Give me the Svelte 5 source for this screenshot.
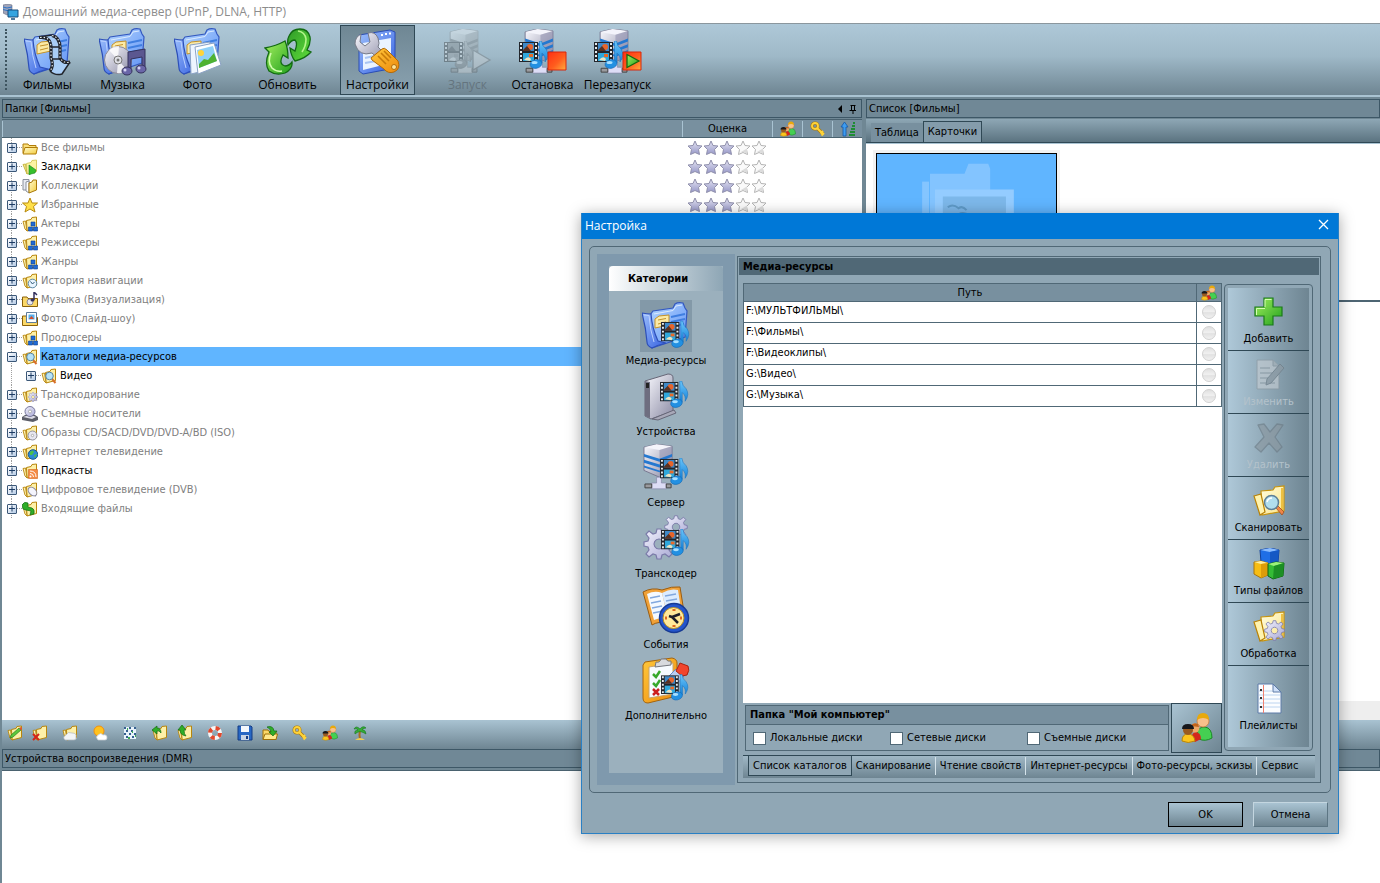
<script>
  const mainGroups = [
    [
      { label: 'Фильмы', icon: 'films' },
      { label: 'Музыка', icon: 'music' },
      { label: 'Фото', icon: 'photo' }
    ],
    [{ label: 'Обновить', icon: 'refresh' }],
    [{ label: 'Настройки', icon: 'tools', active: true }],
    [
      { label: 'Запуск', icon: 'srv-start', disabled: true },
      { label: 'Остановка', icon: 'srv-stop' },
      { label: 'Перезапуск', icon: 'srv-restart' }
    ]
  ];

  const tree = [
    { label: 'Все фильмы', icon: 's-open' },
    { label: 'Закладки', icon: 's-bookmark', strong: true },
    { label: 'Коллекции', icon: 's-collection' },
    { label: 'Избранные', icon: 's-star' },
    { label: 'Актеры', icon: 's-cubes' },
    { label: 'Режиссеры', icon: 's-cubes' },
    { label: 'Жанры', icon: 's-cubes' },
    { label: 'История навигации', icon: 's-clock' },
    { label: 'Музыка (Визуализация)', icon: 's-music' },
    { label: 'Фото (Слайд-шоу)', icon: 's-photo' },
    { label: 'Продюсеры', icon: 's-cubes' },
    { label: 'Каталоги медиа-ресурсов', icon: 's-search', strong: true, selected: true, open: true },
    { label: 'Видео', icon: 's-search', strong: true, child: true },
    { label: 'Транскодирование', icon: 's-gear' },
    { label: 'Съемные носители', icon: 's-drive' },
    { label: 'Образы CD/SACD/DVD/DVD-A/BD (ISO)', icon: 's-disc' },
    { label: 'Интернет телевидение', icon: 's-globe' },
    { label: 'Подкасты', icon: 's-rss', strong: true },
    { label: 'Цифровое телевидение (DVB)', icon: 's-dish' },
    { label: 'Входящие файлы', icon: 's-incoming' }
  ];

  const smallGroups = [
    ['s-edit', 's-delete'],
    ['s-cloud'],
    ['s-weather'],
    ['s-grid'],
    ['s-back', 's-up'],
    ['s-buoy'],
    ['s-floppy', 's-import'],
    ['s-key'],
    ['users'],
    ['s-palm']
  ];
  const smallTitles = {
    's-edit': 'Изменить', 's-delete': 'Удалить', 's-cloud': 'Облако', 's-weather': 'Погода', 's-grid': 'Таблица',
    's-back': 'Назад', 's-up': 'Вверх', 's-buoy': 'Справка', 's-floppy': 'Сохранить', 's-import': 'Открыть',
    's-key': 'Доступ', users: 'Пользователи', 's-palm': 'Отдых'
  };

  const categories = [
    { label: 'Медиа-ресурсы', icon: 'c-media', active: true },
    { label: 'Устройства', icon: 'c-device' },
    { label: 'Сервер', icon: 'c-server' },
    { label: 'Транскодер', icon: 'c-gears' },
    { label: 'События', icon: 'c-events' },
    { label: 'Дополнительно', icon: 'c-extra' }
  ];

  const paths = ['F:\\МУЛЬТФИЛЬМЫ\\', 'F:\\Фильмы\\', 'F:\\Видеоклипы\\', 'G:\\Видео\\', 'G:\\Музыка\\'];

  const actions = [
    { label: 'Добавить', icon: 'a-add' },
    { label: 'Изменить', icon: 'a-edit', disabled: true },
    { label: 'Удалить', icon: 'a-delete', disabled: true },
    { label: 'Сканировать', icon: 'a-scan' },
    { label: 'Типы файлов', icon: 'a-cubes' },
    { label: 'Обработка', icon: 'a-process' },
    { label: 'Плейлисты', icon: 'a-notes' }
  ];

  const disks = ['Локальные диски', 'Сетевые диски', 'Съемные диски'];
  const pages = ['Список каталогов', 'Сканирование', 'Чтение свойств', 'Интернет-ресурсы', 'Фото-ресурсы, эскизы', 'Сервис'];
  const stars = [1, 2, 3, 4, 5];
</script>

{#snippet icon(name, size)}
  <svg class="icon" width={size} height={size} aria-hidden="true"><use href={'#' + name} /></svg>
{/snippet}

<svg class="defs" width="0" height="0" aria-hidden="true">
  <defs>
    <linearGradient id="gBlue" x1="0" y1="0" x2="1" y2="1"><stop offset="0" stop-color="#b4d6ff" /><stop offset="1" stop-color="#5d90f4" /></linearGradient>
    <linearGradient id="gBlueD" x1="0" y1="0" x2="1" y2="1"><stop offset="0" stop-color="#9cbffc" /><stop offset="1" stop-color="#3560e0" /></linearGradient>
    <linearGradient id="gGreen" x1="0" y1="0" x2="1" y2="1"><stop offset="0" stop-color="#a5f05f" /><stop offset="1" stop-color="#1f9f1c" /></linearGradient>
    <linearGradient id="gGreenD" x1="0" y1="0" x2="1" y2="1"><stop offset="0" stop-color="#2f9a28" /><stop offset="1" stop-color="#5fdd3a" /></linearGradient>
    <linearGradient id="gYel" x1="0" y1="0" x2="1" y2="1"><stop offset="0" stop-color="#fffbd0" /><stop offset="1" stop-color="#f3cc3c" /></linearGradient>
    <linearGradient id="gYelL" x1="0" y1="0" x2="1" y2="1"><stop offset="0" stop-color="#fffde0" /><stop offset="1" stop-color="#fbe488" /></linearGradient>
    <linearGradient id="gMetal" x1="0" y1="0" x2="1" y2="1"><stop offset="0" stop-color="#fafaff" /><stop offset="1" stop-color="#8b8ba4" /></linearGradient>
    <linearGradient id="gLav" x1="0" y1="0" x2="1" y2="1"><stop offset="0" stop-color="#f2f2fd" /><stop offset="1" stop-color="#a8a8d4" /></linearGradient>
    <linearGradient id="gNote" x1="0" y1="0" x2="0" y2="1"><stop offset="0" stop-color="#6cc6fa" /><stop offset="1" stop-color="#1380d8" /></linearGradient>
    <linearGradient id="gOrange" x1="0" y1="0" x2="1" y2="1"><stop offset="0" stop-color="#ffc83c" /><stop offset="1" stop-color="#ee8a0c" /></linearGradient>
    <linearGradient id="gStop" x1="0" y1="0" x2="1" y2="1"><stop offset="0" stop-color="#ff2f14" /><stop offset=".55" stop-color="#ff5d1e" /><stop offset="1" stop-color="#ffae3e" /></linearGradient>
    <linearGradient id="gStar" x1="0" y1="0" x2="0" y2="1"><stop offset="0" stop-color="#e4e4f2" /><stop offset="1" stop-color="#9697c8" /></linearGradient>
  </defs>

  <!-- shared parts on a 48-unit grid -->
  <symbol id="p-folder" viewBox="0 0 48 48">
    <path d="M8 13 11 9 31 6 33 2Q36 0 41 1L43 6 45 9 43 35Q28 40 10 46Z" fill="url(#gBlue)" stroke="#3358c0" stroke-width="1.2" />
    <path d="M12 12 31 8.500 34 4 40 3" fill="none" stroke="#dcebff" />
    <path d="M29 15 43 12M29 20 43 17M28 25 42 22" stroke="#3f7ee0" stroke-width="1.800" />
    <path d="M13 17 17 14 27 13V23L13 26Z" fill="#fbeaa6" stroke="#c4922a" />
    <path d="M16 18 24 16.500M16 22 24 20" stroke="#c4922a" />
    <path d="M0 11Q5 12 9 12 10 26 16 39L24 41Q16 43 10 46 5 44 5 40 4 26 0 11Z" fill="url(#gBlueD)" stroke="#2d4fb8" stroke-width="1.2" />
    <path d="M2 13 7 13.500Q8 28 12 40" fill="none" stroke="#bcd2ff" />
  </symbol>
  <symbol id="p-media" viewBox="0 0 30 28">
    <path d="M0 1H19V21H0Z" fill="#23262c" />
    <path d="M4 2H15V10H4Z" fill="#3f89c8" /><path d="M4 12H15V20H4Z" fill="#2fa8dc" />
    <circle cx="11" cy="6" r="3" fill="#e8642a" /><path d="M4 9 8 5 12 10H4Z" fill="#5a3222" /><path d="M5 19Q9 14 12 18L11 20Z" fill="#ece3c0" /><path d="M10 13h4v3h-4z" fill="#e86a28" />
    <path d="M1 3h2M1 7h2M1 11h2M1 15h2M1 19h2M16 3h2M16 7h2M16 11h2M16 15h2M16 19h2" stroke="#e6ebee" stroke-width="2" />
    <path d="M20.500 0H22.500Q23 5 27 8 31 14 26 21 27 15 23 12V22H20.500Z" fill="url(#gNote)" stroke="#1a75c0" stroke-width=".6" />
    <ellipse cx="17" cy="23" rx="6" ry="4.300" transform="rotate(-12 17 23)" fill="#2290e2" stroke="#1568b4" stroke-width=".6" />
    <ellipse cx="15.500" cy="21.500" rx="3" ry="1.500" fill="#a8e0ff" />
  </symbol>
  <symbol id="p-server" viewBox="0 0 32 48">
    <path d="M1 3 14 0 30 2 30 29 17 34 1 27Z" fill="url(#gMetal)" stroke="#77778f" />
    <path d="M1 3 17 6 30 2 14 0Z" fill="#f4f4fb" />
    <path d="M17 6 30 2V29L17 34Z" fill="#8f8fae" opacity=".55" />
    <path d="M1 10 17 15 30 10V13L17 18 1 13ZM1 16 17 21 30 16V19L17 24 1 19ZM1 22 17 27 30 22V24L17 29 1 24Z" fill="#2478d0" />
    <path d="M14 34H19V40H24V46H9V40H14Z" fill="#ddddf6" stroke="#8888aa" stroke-width=".7" />
    <path d="M2 41H9V45H2ZM24 41H29V45H24Z" fill="#9a9a9e" stroke="#444" />
  </symbol>
  <symbol id="p-gear" viewBox="0 0 32 32">
    <path fill-rule="evenodd" d="M14 1h4l1 4 3 1 4-3 3 3-3 4 1 3 4 1v4l-4 1-1 3 3 4-3 3-4-3-3 1-1 4h-4l-1-4-3-1-4 3-3-3 3-4-1-3-4-1v-4l4-1 1-3-3-4 3-3 4 3 3-1ZM16 11a5 5 0 1 0 .1 0Z" fill="url(#gLav)" stroke="#7a7aa8" stroke-width="1.200" />
  </symbol>
  <symbol id="p-yfolder" viewBox="0 0 32 32">
    <path d="M8 6 20 5 22 2 31 1V26L9 30Z" fill="url(#gYelL)" stroke="#c8940e" stroke-width="1.200" />
    <path d="M1 11 8 9 12 27 7 30Z" fill="#fff3ae" stroke="#b98206" stroke-width="1.200" />
    <path d="M29 3V25" stroke="#eec040" stroke-width="2" />
  </symbol>
  <symbol id="p-lens" viewBox="0 0 22 22">
    <path d="M13 14 15 12 21 18 19 21Z" fill="#f08648" stroke="#a04c1c" stroke-width=".8" />
    <circle cx="8.500" cy="8.500" r="7" fill="#a8dbf4" fill-opacity=".9" stroke="#5e7f96" stroke-width="1.500" />
    <path d="M4 8Q5 4 9 4" fill="none" stroke="#fff" stroke-width="1.500" />
  </symbol>

  <!-- main toolbar -->
  <symbol id="films" viewBox="0 0 48 48">
    <use href="#p-folder" width="48" height="48" />
    <path d="M15 9 28 7Q36 9 36 20V30Q40 36 46 34L38 46Q31 48 26 43 30 38 27 30V20Q26 9 15 9Z" fill="#a9cdf6" />
    <path d="M15 9.500Q27 8 27 20V30Q30 38 26 43M28 7.500Q36 9 36 20V30Q40 36 46 34" fill="none" stroke="#22252c" stroke-width="3.200" /><path d="M15 9 28 7M46 34 38 46Q31 48 26 43" fill="none" stroke="#22252c" stroke-width="1.500" />
    <path d="M16 9.500Q27 8 27 20V30Q30 38 26 43M28 7.500Q36 9 36 20V30Q40 36 46 34" fill="none" stroke="#e6ecf2" stroke-width="1.200" stroke-dasharray="1.500 2" />
    <path d="M27 19H36M28 31H36" stroke="#22252c" stroke-width="1.300" />
  </symbol>
  <symbol id="music" viewBox="0 0 48 48">
    <use href="#p-folder" width="48" height="48" />
    <circle cx="19" cy="32" r="13.500" fill="url(#gMetal)" stroke="#8a8a98" />
    <path d="M19 32 10 22Q14 18 20 18ZM19 32 28 42Q24 46 18 45Z" fill="#fff" opacity=".8" />
    <circle cx="19" cy="32" r="4" fill="#dfe0e6" stroke="#777" /><circle cx="19" cy="32" r="1.500" fill="#777" />
    <path d="M29 24 46 21V41H43V29L32 31V43H29Z" fill="#5b5790" stroke="#35325c" />
    <ellipse cx="28" cy="43" rx="5" ry="4" fill="#6a66a8" stroke="#35325c" /><ellipse cx="42" cy="41" rx="5" ry="4" fill="#6a66a8" stroke="#35325c" /><circle cx="26" cy="42" r="1.500" fill="#d6d4f4" /><circle cx="40" cy="40" r="1.500" fill="#d6d4f4" />
  </symbol>
  <symbol id="photo" viewBox="0 0 48 48">
    <use href="#p-folder" width="48" height="48" />
    <path d="M16 17 36 14 34 42 17 46Z" fill="#eef5ff" stroke="#8ba2c4" />
    <path d="M21 19 40 15 47 37 24 46Z" fill="#fff" stroke="#8ba2c4" />
    <path d="M23 22 39 18 43 33 25 40Z" fill="#8fd0f8" /><circle cx="27" cy="25" r="3" fill="#ffd43a" />
    <path d="M25 36 30 31 34 32 40 25 43 33 25 40Z" fill="#4fb232" />
  </symbol>
  <symbol id="refresh" viewBox="0 0 48 48">
    <path d="M25 8Q28 1 36 1 44 1 46 9 47 15 43 22L47 24Q42 30 31 33 27 28 26 20L31 23Q34 15 31 12 27 12 24 17 23 12 25 8Z" fill="url(#gGreenD)" stroke="#126a12" stroke-width="1.300" />
    <path d="M34 3Q41 4 42 11 42 18 38 24" fill="none" stroke="#b4f58a" stroke-width="1.600" />
    <path d="M1 20Q12 18 21 13 24 20 24 30L19 27Q14 36 21 38 25 38 28 34 29 41 21 45 12 48 5 43 0 36 5 24Z" fill="url(#gGreen)" stroke="#126a12" stroke-width="1.300" />
    <path d="M7 25Q3 34 8 40 12 44 18 43" fill="none" stroke="#d0ffae" stroke-width="1.600" />
  </symbol>
  <symbol id="tools" viewBox="0 0 48 48">
    <path d="M5 7 36 2 41 4V40L9 46 5 43Z" fill="url(#gBlueD)" stroke="#2a4db4" />
    <path d="M9 15 37 10V35L9 42Z" fill="#eaf3ff" /><path d="M27 7h2M31 6h2M35 5.500h2" stroke="#fff" stroke-width="2" />
    <path d="M11 25 18 23M11 30 25 27M11 35 22 33" stroke="#a8c4f2" stroke-width="2" />
    <path d="M1 16Q1 9 7 6L6 14 11 18 16 14 14 5Q21 3 24 10 26 16 24 19L32 27 27 33 18 25Q5 29 1 16Z" fill="url(#gMetal)" stroke="#777b88" />
    <path d="M17 30 28 21Q30 19 33 22L44 33Q47 41 40 44 34 46 30 41L18 32Z" fill="url(#gOrange)" stroke="#b36a08" />
    <path d="M24 28 32 36M27 25 35 33M30 23 37 30" stroke="#c67a0a" stroke-width="1.600" /><circle cx="40" cy="39" r="2.500" fill="#fde39a" stroke="#b36a08" />
  </symbol>
  <symbol id="p-srvmedia" viewBox="0 0 48 48">
    <use href="#p-server" x="5" y="1" width="31" height="46" />
    <use href="#p-media" x="0" y="13" width="30" height="28" />
  </symbol>
  <symbol id="srv-stop" viewBox="0 0 48 48">
    <use href="#p-srvmedia" width="48" height="48" />
    <path d="M29 24H47V42H29Z" fill="url(#gStop)" stroke="#d8260c" />
  </symbol>
  <symbol id="srv-restart" viewBox="0 0 48 48">
    <use href="#p-srvmedia" width="48" height="48" />
    <path d="M29 24H47V42H29Z" fill="url(#gStop)" stroke="#d8260c" />
    <path d="M33 26.500 45 33 33 39.500Z" fill="url(#gGreen)" stroke="#146a10" stroke-width="1.300" />
  </symbol>
  <symbol id="srv-start" viewBox="0 0 48 48">
    <use href="#p-srvmedia" width="48" height="48" />
    <path d="M29 22 46 32 29 42Z" fill="#d8d8d8" stroke="#666" stroke-width="1.300" />
  </symbol>

  <!-- dialog categories -->
  <symbol id="c-media" viewBox="0 0 48 48">
    <use href="#p-folder" width="48" height="48" />
    <use href="#p-media" x="19" y="19" width="29" height="27" />
  </symbol>
  <symbol id="c-device" viewBox="0 0 48 48">
    <path d="M3 8 26 1Q31 1 31 5V38L9 46 3 43Z" fill="url(#gMetal)" stroke="#666677" />
    <path d="M3 8 8 9V45L3 43Z" fill="#6e6e80" /><path d="M4 10h3v5H4z" fill="#222" />
    <path d="M10 46 32 37 34 40 16 47Z" fill="#a8a8b8" stroke="#666677" />
    <use href="#p-media" x="18" y="8" width="29" height="27" />
  </symbol>
  <symbol id="c-server" viewBox="0 0 48 48">
    <use href="#p-server" x="1" y="0" width="31" height="47" />
    <use href="#p-media" x="18" y="14" width="29" height="27" />
  </symbol>
  <symbol id="c-gears" viewBox="0 0 48 48">
    <use href="#p-gear" x="22" y="0" width="24" height="24" />
    <use href="#p-gear" x="1" y="13" width="32" height="32" />
    <use href="#p-media" x="19" y="14" width="29" height="27" />
  </symbol>
  <symbol id="c-events" viewBox="0 0 48 48">
    <path d="M1 6Q10 1 20 4 30 0 38 1L43 32Q30 34 26 37 16 35 10 39Z" fill="#f0a138" stroke="#9b5c10" />
    <path d="M5 8Q13 4 20 7L26 33Q18 31 12 34Z" fill="#f4f9ff" /><path d="M20 7Q28 2 36 4L40 30Q31 30 26 33Z" fill="#dcecff" />
    <path d="M8 12 18 10M9 17 19 15M10 22 20 20M11 27 21 25M23 10 34 8M24 15 35 13M25 20 35 18" stroke="#82a8de" stroke-width="1.600" />
    <circle cx="32" cy="32" r="14.500" fill="#2455cc" stroke="#173a94" stroke-width="1.500" /><circle cx="31.500" cy="32" r="10.500" fill="#ffe99a" stroke="#b98f24" />
    <path d="M32 23v2M32 39v2M23 32h2M38 32h2" stroke="#e06a1e" stroke-width="3" /><path d="M36 37 30 31 38 28M30 31 27 30" fill="none" stroke="#1f1f28" stroke-width="2.500" />
  </symbol>
  <symbol id="c-extra" viewBox="0 0 48 48">
    <path d="M3 5 30 1Q35 2 35 6V39L6 46Q1 46 1 41V8Z" fill="url(#gOrange)" stroke="#a4640e" />
    <path d="M7 10 31 6V37L7 41Z" fill="#f7fbff" stroke="#c7a46c" /><path d="M14 5Q18 6 19 2H24Q25 5 29 4L29 8 13 10Z" fill="#d8dade" stroke="#74777e" />
    <path d="M11 17 14 20 18 14M11 26 14 29 18 23" fill="none" stroke="#38a82c" stroke-width="2.500" /><path d="M11 32 17 38M17 32 11 38" stroke="#cc1f1f" stroke-width="2.500" />
    <path d="M34 12 42 19 30 32 24 22Z" fill="#b8cdf2" stroke="#6c88c4" /><path d="M38 6 46 9Q48 13 45 18L40 19 34 14Z" fill="#f2452c" stroke="#aa2410" />
    <use href="#p-media" x="19" y="17" width="28" height="27" />
  </symbol>

  <!-- dialog actions -->
  <symbol id="a-add" viewBox="0 0 32 32">
    <path d="M11 2H20V11H29V20H20V29H11V20H2V11H11Z" fill="url(#gGreen)" stroke="#1a7a1a" stroke-width="1.200" />
    <path d="M12 11V3.500H18.500M3.500 19V12.500H12" fill="none" stroke="#d4ffb4" />
  </symbol>
  <symbol id="a-edit" viewBox="0 0 32 32">
    <path d="M4 1H20L26 7V30H4Z" fill="#c9cfd4" stroke="#8b969e" /><path d="M20 1V7H26" fill="#aeb7bd" stroke="#8b969e" />
    <path d="M7 9H17M7 14H19M7 19H15M7 24H22" stroke="#98a2a9" stroke-width="1.500" /><path d="M27 5 31 9 18 24 13 26 14 20Z" fill="#8f9aa2" stroke="#6b7780" />
  </symbol>
  <symbol id="a-delete" viewBox="0 0 32 32">
    <path d="M5 3 11 2 17 10 24 2 30 3 22 15 29 25 24 30 16 21 8 30 2 25 11 15Z" fill="#8a969e" stroke="#6a7882" stroke-width="1.300" stroke-linejoin="round" />
  </symbol>
  <symbol id="a-scan" viewBox="0 0 32 32"><use href="#p-yfolder" width="32" height="32" /><use href="#p-lens" x="10" y="9" width="22" height="22" /></symbol>
  <symbol id="a-process" viewBox="0 0 32 32"><use href="#p-yfolder" width="32" height="32" /><use href="#p-gear" x="11" y="9" width="21" height="21" /></symbol>
  <symbol id="a-cubes" viewBox="0 0 32 32">
    <path d="M7 2 17 0 26 2 25 14 17 16 8 14Z" fill="#1f6ee6" stroke="#0f3f9c" stroke-linejoin="round" /><path d="M7 2 17 4 26 2 17 0Z" fill="#8abcff" /><path d="M17 4 26 2 25 14 17 16Z" fill="#1558c4" />
    <path d="M1 14 8 13 15 15V27L8 30 1 26Z" fill="#f6bd14" stroke="#a8740a" stroke-linejoin="round" /><path d="M1 14 8 16 15 15 8 13Z" fill="#fff0a0" /><path d="M8 16 15 15V27L8 30Z" fill="#dc9c0a" />
    <path d="M15 16 23 14 31 15 30 28 20 31 15 28Z" fill="#35bc36" stroke="#0f6414" stroke-linejoin="round" /><path d="M15 16 21 18 31 15 23 14Z" fill="#9cf07a" /><path d="M21 18 31 15 30 28 20 31Z" fill="#1c8f24" />
  </symbol>
  <symbol id="a-notes" viewBox="0 0 32 32">
    <path d="M5 1H20L28 9V30H5Z" fill="#fbfdff" stroke="#5d7ba8" /><path d="M20 1V9H28Z" fill="#cfe0f8" stroke="#5d7ba8" />
    <path d="M6 8H19M6 12H27M6 16H27M6 20H27M6 24H27" stroke="#bcd4f0" /><path d="M10.500 2V30" stroke="#f08070" /><path d="M7 7h2M7 15h2M7 24h2" stroke="#333" stroke-width="2" />
  </symbol>
  <symbol id="users" viewBox="0 0 32 32">
    <path d="M16 21Q17 15 24 15 31 16 31 26 24 30 18 27Z" fill="#45cf52" stroke="#198a24" />
    <circle cx="22" cy="9" r="6" fill="#f9c08a" stroke="#c87f3c" stroke-width=".8" /><path d="M16 8Q16 1 22 1 28 1 28 8 22 4 16 8Z" fill="#e8a90c" />
    <path d="M10 27Q11 20 15 20 20 21 20 27L14 30Z" fill="#d4261c" /><circle cx="14" cy="16" r="4.500" fill="#eea868" /><path d="M10 14Q12 10 17 12L18 15Z" fill="#c4641c" />
    <path d="M1 29Q1 22 7 22 13 22 14 29 7 32 1 29Z" fill="#fcc51e" stroke="#b8860a" /><circle cx="7" cy="18" r="5" fill="#9a5a20" /><path d="M1 17Q1 12 7 12 13 12 13 17Z" fill="#17171b" />
  </symbol>

  <!-- 16-unit icons -->
  <symbol id="s-app" viewBox="0 0 16 16">
    <path d="M0 1 5 0 9 1V10L4 11 0 9Z" fill="#9fa4ba" stroke="#666b80" stroke-width=".6" /><path d="M0 3 4 4 9 3M0 5.500 4 6.500 9 5.500" stroke="#2d73c8" fill="none" />
    <path d="M5 6H15V13H5Z" fill="#34a4e0" stroke="#174c7c" /><path d="M8 15h4" stroke="#174c7c" stroke-width="1.500" />
  </symbol>
  <symbol id="s-base" viewBox="0 0 16 16"><path d="M4.500 4.500 9 3.500 10 1.500 14.500 1V12.500L5 15Z" fill="#fdf0a8" stroke="#b8860e" /><path d="M1 5.500 3.500 5 5 15 3 13Z" fill="#fff4b0" stroke="#b8860e" stroke-width=".9" /></symbol>
  <symbol id="s-open" viewBox="0 0 16 16"><path d="M1 13V4H6L7 5.500H14V7" fill="#fbe07c" stroke="#b07c08" /><path d="M1 14 3 7.500H15.500L14 14Z" fill="url(#gYel)" stroke="#b07c08" /></symbol>
  <symbol id="s-bookmark" viewBox="0 0 16 16"><path d="M4.500 4.500 9 3.500 10 1.500 14.500 1V12.500L5 15Z" fill="#fdf3a4" stroke="#d8cc60" /><path d="M1 5.500 3.500 5 5 15Z" fill="#f6eb88" stroke="#c8b848" /><path d="M7 6 14 11 13 14 9 15 7 16Z" fill="#37c02c" stroke="#17801a" stroke-width=".6" /></symbol>
  <symbol id="s-collection" viewBox="0 0 16 16"><path d="M1 1.500H7V12H1Z" fill="#e8ebf2" stroke="#8a909c" /><path d="M4 4 7 3V15L4 13Z" fill="#fff" stroke="#8a909c" /><path d="M7 5 10 4 11 2H14.500V12L7 15Z" fill="url(#gYel)" stroke="#a87808" /></symbol>
  <symbol id="s-star" viewBox="0 0 16 16"><path d="M8 1 10 6 15.500 6 11.500 9.500 13 15 8 12 3 15 4.500 9.500 .500 6 6 6Z" fill="#ffe04a" stroke="#b88a10" stroke-linejoin="round" /></symbol>
  <symbol id="s-cubes" viewBox="0 0 16 16"><use href="#s-base" width="16" height="16" /><path d="M9 6h4v4H9zM6.500 11h4v4h-4zM11.500 11h4v4h-4z" fill="#1f6ad4" stroke="#0e3f94" stroke-width=".6" /></symbol>
  <symbol id="s-clock" viewBox="0 0 16 16"><use href="#s-base" width="16" height="16" /><circle cx="10.500" cy="10.500" r="4.300" fill="#e9f5ff" stroke="#5a88a8" /><path d="M8.500 8.500 10.500 11 12.500 9" stroke="#2d5878" fill="none" /></symbol>
  <symbol id="s-music" viewBox="0 0 16 16"><path d="M.500 14.500V5H5L6 6.500H15.500V14.500Z" fill="#fbd868" stroke="#8a6008" /><circle cx="8" cy="10" r="3" fill="#e8e8f0" stroke="#889" /><path d="M12 8V0L15 3" stroke="#33305c" stroke-width="1.500" fill="none" /><ellipse cx="10.500" cy="8" rx="2" ry="1.500" fill="#33305c" /></symbol>
  <symbol id="s-photo" viewBox="0 0 16 16"><path d="M.500 14.500V5H5L6 6.500H15.500V14.500Z" fill="#fbd868" stroke="#8a6008" /><path d="M4.500 1.500H14.500V11.500H4.500Z" fill="#fff" stroke="#5c7c9c" /><path d="M6.500 3.500h6v5h-6z" fill="#58b0ec" /><path d="M7 8 9.500 5 12 8Z" fill="#d84a28" /></symbol>
  <symbol id="s-search" viewBox="0 0 16 16"><use href="#s-base" width="16" height="16" /><path d="M11 11 14.500 15" stroke="#d8702c" stroke-width="2" /><circle cx="8.500" cy="8" r="3.800" fill="#b4e2f8" stroke="#5884a0" /></symbol>
  <symbol id="s-gear" viewBox="0 0 16 16"><use href="#s-base" width="16" height="16" /><use href="#p-gear" x="6" y="5" width="10" height="10" /></symbol>
  <symbol id="s-drive" viewBox="0 0 16 16"><path d="M0 11 3 9H13L16 11V14L11 16 0 14Z" fill="#5c5e68" /><path d="M1 11 4 10H12L14 11 10 13Z" fill="#dcdce6" /><circle cx="8" cy="5.500" r="5" fill="url(#gLav)" stroke="#77779c" /><circle cx="8" cy="5.500" r="1.500" fill="#fff" stroke="#888" stroke-width=".6" /></symbol>
  <symbol id="s-disc" viewBox="0 0 16 16"><use href="#s-base" width="16" height="16" /><circle cx="10.500" cy="10.500" r="4.500" fill="#e6e6f0" stroke="#90909c" /><circle cx="10.500" cy="10.500" r="1.200" fill="#fff" stroke="#888" stroke-width=".6" /></symbol>
  <symbol id="s-globe" viewBox="0 0 16 16"><use href="#s-base" width="16" height="16" /><circle cx="11" cy="10.500" r="4.800" fill="#2c8ad4" stroke="#185890" /><path d="M8 8Q11 5 12 8L10 11 8 11ZM12 11 15 10 13 14Z" fill="#4cc048" /></symbol>
  <symbol id="s-rss" viewBox="0 0 16 16"><use href="#s-base" width="16" height="16" /><path d="M6.500 6.500h9v9h-9z" fill="#f58a44" stroke="#d2641c" stroke-width=".6" /><circle cx="8.500" cy="13.500" r="1" fill="#fff" /><path d="M8 10.500Q11.500 10.500 11.500 14M8 8Q14 8 14 14" fill="none" stroke="#fff" /></symbol>
  <symbol id="s-dish" viewBox="0 0 16 16"><use href="#s-base" width="16" height="16" /><path d="M7 6Q5 13 14 14Z" fill="#e2e2f0" stroke="#88889c" /><ellipse cx="10.500" cy="9.500" rx="5" ry="3.500" transform="rotate(45 10.500 9.500)" fill="#f4f4fc" stroke="#88889c" /></symbol>
  <symbol id="s-incoming" viewBox="0 0 16 16"><use href="#s-base" width="16" height="16" /><path d="M0 4Q2 0 6 2V6L10 7Q13 8 12 13L8 14 9 10 4 9 1 8Z" fill="#2fae28" stroke="#146c14" stroke-width=".7" /></symbol>
  <symbol id="s-edit" viewBox="0 0 16 16"><use href="#s-base" width="16" height="16" /><path d="M3 13 4 10 12 3 14 5 6 12Z" fill="#5cc83c" stroke="#2c7c1c" stroke-width=".7" /><path d="M12 3 14 2 15 4 14 5Z" fill="#e84c30" /></symbol>
  <symbol id="s-delete" viewBox="0 0 16 16"><use href="#s-base" width="16" height="16" /><path d="M1 9 7 15M7 9 1 15" stroke="#d42418" stroke-width="2" /></symbol>
  <symbol id="s-cloud" viewBox="0 0 16 16"><use href="#s-base" width="16" height="16" /><path d="M3 15Q0 12 4 10 6 6 10 8 15 8 14 12 15 15 12 15Z" fill="#f2f4f6" stroke="#b0b6bc" stroke-width=".7" /></symbol>
  <symbol id="s-weather" viewBox="0 0 16 16"><circle cx="7" cy="6" r="5" fill="#ffc21e" stroke="#f09010" /><path d="M6 15Q3 12 6 10 9 7 11 10 15 9 15 13 15 15 13 15Z" fill="#fff" stroke="#c8ccd0" stroke-width=".7" /></symbol>
  <symbol id="s-grid" viewBox="0 0 16 16"><path d="M2 2h12v12H2z" fill="#e8f2fb" /><path d="M2 3h2M7 3h2M12 3h2M4 6h2M9 6h2M2 9h2M7 9h2M12 9h2M4 12h2M10 12h2" stroke="#356090" stroke-width="2" /><path d="M5 4h1M10 7h1M6 13h2M13 11h1" stroke="#3fae52" stroke-width="2" /></symbol>
  <symbol id="s-back" viewBox="0 0 16 16"><use href="#s-base" width="16" height="16" /><path d="M0 5 5 1V3Q9 3 9 8 7 5 5 6V9Z" fill="#2fae28" stroke="#146c14" stroke-width=".7" /></symbol>
  <symbol id="s-up" viewBox="0 0 16 16"><use href="#s-base" width="16" height="16" /><path d="M5 0 9 5H7Q7 9 9 11 3 10 3 5H1Z" fill="#2fae28" stroke="#146c14" stroke-width=".7" /></symbol>
  <symbol id="s-buoy" viewBox="0 0 16 16"><circle cx="8" cy="8" r="5" fill="none" stroke="#f6f6f6" stroke-width="4" /><circle cx="8" cy="8" r="5" fill="none" stroke="#e0492e" stroke-width="4" stroke-dasharray="3.900 3.950" /></symbol>
  <symbol id="s-floppy" viewBox="0 0 16 16"><path d="M1 1H14L15 2V15H1Z" fill="#2767c4" stroke="#143c84" /><path d="M4 1H12V7H4Z" fill="#f4f8fc" /><path d="M4 10H12V15H4Z" fill="#c8d4e4" /><path d="M9 11h2v3H9z" fill="#143c84" /></symbol>
  <symbol id="s-import" viewBox="0 0 16 16"><path d="M1 14.500V5H6L7 6.500H14V14.500Z" fill="#fbd868" stroke="#a07008" /><path d="M1 14.500 3 9H15.500L14 14.500Z" fill="#ffe88c" stroke="#a07008" /><path d="M5 2Q11 0 12 6H15L11 11 7 7H9Q9 4 5 2Z" fill="#2fae28" stroke="#146c14" stroke-width=".7" /></symbol>
  <symbol id="s-key" viewBox="0 0 16 16"><path d="M7 7 13 13" stroke="#b07c08" stroke-width="3.500" /><circle cx="5" cy="5" r="3" fill="none" stroke="#b07c08" stroke-width="3" /><circle cx="5" cy="5" r="3" fill="none" stroke="#ffd43a" stroke-width="1.800" /><path d="M7 7 13 13M13 10 10.500 12.500M14 12 11.500 14.500" stroke="#ffd43a" stroke-width="2" /></symbol>
  <symbol id="s-palm" viewBox="0 0 16 16"><path d="M8 5Q7 10 8 14" stroke="#a86c20" stroke-width="2" fill="none" /><path d="M8 4Q4 0 2 4 5 3 6 5 2 5 3 9 5 7 8 6.500 11 7 14 9 14 5 10 4.500 12 3 14 3 11 0 8 4Z" fill="#35ae34" stroke="#187424" stroke-width=".6" /><path d="M3 15Q8 11 13 15Z" fill="#f0ce50" /></symbol>
  <symbol id="s-sort" viewBox="0 0 16 16"><path d="M4.500 1 8 6H6V15H3V6H1Z" fill="#3e9cf0" stroke="#1458a8" stroke-width=".8" /><path d="M13 2h2M12 5h3M11 8h4M10 11h5M9 14h6" stroke="#1f8c34" stroke-width="2" /></symbol>
  <symbol id="star-on" viewBox="0 0 16 16"><path d="M8 1 10 5.500 15 6 11.500 9.500 12.500 14.500 8 12.500 3.500 14.500 4.500 9.500 1 6 6 5.500Z" fill="url(#gStar)" stroke="#9090ac" stroke-linejoin="round" /></symbol>
  <symbol id="star-off" viewBox="0 0 16 16"><path d="M8 1 10 5.500 15 6 11.500 9.500 12.500 14.500 8 12.500 3.500 14.500 4.500 9.500 1 6 6 5.500Z" fill="#fafafa" stroke="#b4b4b4" stroke-linejoin="round" /><path d="M5 12.500 12 8.500 12 13.500 8 12Z" fill="#dcdcdc" /></symbol>
</svg>

<div class="app">
  <header class="titlebar">{@render icon('s-app', 16)}<span>Домашний медиа-сервер (UPnP, DLNA, HTTP)</span></header>

  <nav class="toolbar">
    {#each mainGroups as group}
      <div class="group">
        {#each group as b}
          <button class="tool" class:active={b.active} disabled={b.disabled}>{@render icon(b.icon, 48)}<span>{b.label}</span></button>
        {/each}
      </div>
    {/each}
  </nav>

  <main class="workspace">
    <section class="pane">
      <h2 class="caption">
        <span>Папки [Фильмы]</span>
        <svg class="pins" width="20" height="10" aria-hidden="true"><path d="M5 1V9L1 5Z" fill="#000" /><path d="M13.500 1.500H18.500M14.500 1V6M17.500 1V6M12.500 6.500H19M16 7V10" stroke="#000" fill="none" /></svg>
      </h2>
      <div class="columns">
        <span></span><span>Оценка</span><span>{@render icon('users', 16)}</span><span>{@render icon('s-key', 16)}</span><span>{@render icon('s-sort', 16)}</span>
      </div>
      <ul class="tree">
        {#each tree as n}
          <li class:child={n.child} class:strong={n.strong} class:selected={n.selected}>
            <button class="toggle" class:open={n.open} aria-label={n.label}></button>
            <span class="dots"></span>
            {@render icon(n.icon, 16)}
            <span class="label">{n.label}</span>
            <span class="rating">{#each stars as s}{@render icon(s < 4 ? 'star-on' : 'star-off', 16)}{/each}</span>
          </li>
        {/each}
      </ul>
    </section>

    <section class="pane right">
      <h2 class="caption"><span>Список [Фильмы]</span></h2>
      <div class="viewtabs"><button>Таблица</button><button class="current">Карточки</button></div>
      <div class="cards">
        <div class="card">
          <svg viewBox="0 0 180 146" aria-hidden="true">
            <path d="M45 28H52V140H45Z" fill="#84c5ff" /><path d="M53 20H88L92 10H112L114 15V140H53Z" fill="#83c4ff" />
            <path d="M58 36H138V140H58Z" fill="#94ccff" /><path d="M66 43H130V130H66Z" fill="#7db8ea" />
            <path d="M71 54Q76 50 82 55 86 52 90 57M82 61Q88 58 93 63" fill="none" stroke="#5f9ac8" stroke-width="2" />
          </svg>
        </div>
      </div>
      <div class="details"></div>
      <div class="strip"></div>
    </section>
  </main>

  <div class="smallbar">
    {#each smallGroups as group}
      <div class="group">
        {#each group as name}<button aria-label={smallTitles[name]}>{@render icon(name, 16)}</button>{/each}
      </div>
    {/each}
  </div>

  <section class="devices">
    <h2 class="caption"><span>Устройства воспроизведения (DMR)</span></h2>
    <div class="blank"></div>
  </section>
</div>

<div class="dialog" role="dialog" aria-labelledby="dlg-title">
  <header>
    <h1 id="dlg-title">Настройка</h1>
    <button aria-label="Закрыть"><svg width="11" height="11" aria-hidden="true"><path d="M1 1 10 10M10 1 1 10" stroke="#fff" stroke-width="1.300" /></svg></button>
  </header>

  <div class="frame">
    <aside>
      <div class="cats">
        <h2>Категории</h2>
        {#each categories as c}
          <button class:active={c.active}><span class="pic">{@render icon(c.icon, 48)}</span><span>{c.label}</span></button>
        {/each}
      </div>
    </aside>

    <section class="page">
      <h2>Медиа-ресурсы</h2>
      <div class="split">
        <div class="main">
          <div class="list">
            <table>
              <thead><tr><th>Путь</th><th class="flag">{@render icon('users', 16)}</th></tr></thead>
              <tbody>
                {#each paths as p}
                  <tr><td>{p}</td><td class="flag"><span class="dot"></span></td></tr>
                {/each}
              </tbody>
            </table>
          </div>
          <div class="under">
            <fieldset>
              <legend>Папка "Мой компьютер"</legend>
              <div class="checks">
                {#each disks as d}<label><input type="checkbox" />{d}</label>{/each}
              </div>
            </fieldset>
            <button class="share" aria-label="Пользователи">{@render icon('users', 32)}</button>
          </div>
        </div>
        <div class="actions">
          {#each actions as a}
            <button disabled={a.disabled}>{@render icon(a.icon, 32)}<span>{a.label}</span></button>
          {/each}
        </div>
      </div>
      <div class="pages">
        {#each pages as p, i}<button class:current={i === 0}>{p}</button>{/each}
      </div>
    </section>
  </div>

  <footer><button class="default">OK</button><button>Отмена</button></footer>
</div>

<style>
  :global(body) { background: #fff; }
  :global(#app) { font: 11px/14px "DejaVu Sans Condensed", "DejaVu Sans", sans-serif; color: #000; }
  .app, .app *, .dialog, .dialog * { box-sizing: border-box; }
  .defs { position: absolute; }
  .icon { display: block; flex: none; }
  button { font: inherit; color: inherit; border: 0; padding: 0; margin: 0; background: none; }
  h1, h2, ul { margin: 0; padding: 0; font-size: inherit; font-weight: normal; list-style: none; }

  .app { display: flex; flex-direction: column; min-height: 100vh; background: #6f8794; }

  .titlebar { display: flex; align-items: center; gap: 4px; height: 23px; padding-left: 3px; background: #fff; color: #8c8c8c; font-family: "Open Sans", sans-serif; font-size: 12px; }
  .toolbar { position: relative; display: flex; gap: 15px; height: 74px; padding: 1px 10px; border-top: 1px solid #8b979e; border-bottom: 2px solid #a9c3d2; background: linear-gradient(#aec8d8, #9fb9c8 45%, #6e8592); font-family: "Open Sans", sans-serif; font-size: 12px; }
  .toolbar::before { content: ""; position: absolute; left: 5px; top: 5px; bottom: 5px; border-left: 2px dotted #3f5560; }
  .group { display: flex; }
  .tool { display: flex; flex-direction: column; align-items: center; gap: 2px; width: 75px; height: 70px; padding-top: 2px; border: 1px solid transparent; }
  .tool.active { border-color: #2f4855; background: linear-gradient(#6f8794, #8aa2b0); }
  .tool:disabled { color: #64747e; }
  .tool:disabled .icon { filter: grayscale(1); opacity: .35; }

  .workspace { flex: 1; display: grid; grid-template-columns: minmax(0, 862fr) minmax(0, 518fr); padding-top: 2px; }
  .pane { display: flex; flex-direction: column; min-width: 0; padding-left: 2px; }
  .caption { display: flex; align-items: center; justify-content: space-between; height: 19px; padding: 0 4px 0 2px; border: 1px solid #3d5766; background: #708896; }
  .columns { display: grid; grid-template-columns: 1fr 90px 30px 30px 30px; height: 19px; margin-top: 1px; padding-top: 1px; border-top: 1px solid #4a626f; border-bottom: 1px solid #4a626f; background: #78909f; }
  .columns span { display: flex; align-items: center; justify-content: center; border-left: 1px solid #a9c3d2; }
  .tree { flex: 1; background: #fff; }
  .tree li { position: relative; display: flex; align-items: center; height: 19px; padding-left: 5px; color: #808080; }
  .tree li::before { content: ""; position: absolute; left: 9px; top: 0; bottom: 0; border-left: 1px dotted #a0a0a0; }
  .tree li.child { padding-left: 24px; }
  .tree li.strong { color: #000; }
  .toggle { position: relative; width: 10px; height: 10px; border: 1px solid #3c5878; border-radius: 1px; background: linear-gradient(135deg, #fff, #b5cbe6); }
  .toggle::before, .toggle::after { content: ""; position: absolute; left: 1px; right: 1px; top: 3px; height: 1px; background: #1c3c64; }
  .toggle::before { transform: rotate(90deg); }
  .toggle.open::before { display: none; }
  .dots { width: 5px; border-top: 1px dotted #a0a0a0; }
  .label { flex: 1; align-self: stretch; padding-left: 3px; line-height: 20px; }
  .selected .label { background: linear-gradient(to right, #fff 2px, #60b5ff 2px); }
  .rating { display: flex; width: 175px; }
  .selected .rating { align-self: stretch; background: #60b5ff; }

  .right { padding-left: 4px; }
  .viewtabs { display: flex; align-items: flex-end; height: 24px; margin-top: 1px; padding: 2px 5px 0; border-bottom: 1px solid #2f4855; background: linear-gradient(#8ea7b5, #5b7380); }
  .viewtabs button { height: 19px; padding: 0 4px; background: #78909f; }
  .viewtabs .current { height: 21px; border: 1px solid #2f4855; border-bottom: 0; background: #849cab; }
  .cards { height: 159px; padding: 6px 7px; background: #fff; border-bottom: 2px solid #4e6573; border-top: 1px solid #a9c3d2; overflow: hidden; }
  .card { width: 187px; height: 150px; border: 3px solid #f2f2f2; }
  .card svg { display: block; width: 181px; height: 146px; border: 1px solid #000; background: #60b5ff; }
  .details { flex: 1; background: #fff; }
  .strip { height: 19px; background: #eee; }

  .smallbar { display: flex; gap: 5px; height: 29px; background: linear-gradient(#a9c3d2, #6e8592); border-left: 2px solid #6f8794; }
  .smallbar button { display: flex; align-items: center; justify-content: center; width: 25px; height: 25px; }
  .devices { padding-left: 2px; }
  .blank { height: 113px; margin-top: 2px; background: #fff; border-top: 1px solid #4a626f; }

  .dialog { position: absolute; left: 581px; top: 213px; width: 758px; border: 1px solid #2a80c4; border-top: 0; background: #90a7b5; box-shadow: 0 2px 14px rgba(0, 0, 0, .35); }
  .dialog header { display: flex; align-items: center; justify-content: space-between; height: 26px; padding: 0 9px 0 3px; background: #0078d7; color: #fff; font-family: "Open Sans", sans-serif; font-size: 12px; }
  .frame { display: flex; gap: 2px; margin: 7px; padding: 7px 9px 7px 7px; border: 1px solid #506876; border-radius: 5px; }
  aside { width: 138px; padding: 12px; background: #7f99ad; }
  .cats { display: flex; flex-direction: column; align-items: center; height: 507px; background: #9bb0bd; }
  .cats h2 { align-self: stretch; height: 25px; margin-bottom: 9px; border-radius: 4px 4px 0 0; background: linear-gradient(to right, #fff, #cbd7de 45%, #8ea6b5); line-height: 26px; font-weight: bold; text-indent: 19px; }
  .cats button { display: flex; flex-direction: column; align-items: center; gap: 2px; height: 71px; }
  .pic { padding: 2px; }
  .active .pic { background: #8399a8; }

  .page { flex: 1; min-width: 0; margin: 2px 0; padding: 1px; border: 1px solid #506876; }
  .page h2 { height: 17px; padding-left: 4px; background: #506876; font-weight: bold; line-height: 18px; }
  .split { display: flex; gap: 2px; height: 470px; margin: 8px 6px 2px 4px; }
  .main { display: flex; flex-direction: column; flex: 1; min-width: 0; }
  .list { flex: 1; background: #fff; }
  table { width: 100%; border-collapse: collapse; table-layout: fixed; }
  th { height: 18px; padding: 0; border: 1px solid #506876; background: #78909f; font-weight: normal; }
  td { height: 21px; padding: 0 0 2px 2px; border: 1px solid #506876; }
  .flag { width: 25px; padding: 0; }
  .flag .icon, .dot { margin: 0 auto; }
  .dot { display: block; width: 14px; height: 14px; border: 1px solid #d2d2d2; border-radius: 50%; background: linear-gradient(#e0e0e0, #f0f0f0 45%, #e2e2e2 55%, #f0f0f0); }
  .under { display: flex; gap: 2px; height: 50px; }
  fieldset { flex: 1; min-width: 0; margin: 2px 0 2px 2px; padding: 0; border: 1px solid #506876; }
  legend { float: left; width: 100%; height: 19px; padding: 0 4px; border-bottom: 1px solid #506876; background: #78909f; font-weight: bold; line-height: 18px; }
  .checks { clear: both; display: grid; grid-template-columns: repeat(3, 137px); padding: 6px 7px 0; }
  label { display: flex; align-items: center; gap: 4px; white-space: nowrap; }
  input { appearance: none; width: 13px; height: 13px; margin: 0; border: 1px solid #506876; background: #fff; }
  .share { display: flex; align-items: center; justify-content: center; width: 51px; border: 1px solid #2f4855; background: linear-gradient(135deg, #a9c3d2, #6e8592); }
  .actions { display: flex; flex-direction: column; width: 89px; height: 467px; margin-top: 1px; padding: 3px; border: 1px solid #506876; border-radius: 4px; }
  .actions button { display: flex; flex-direction: column; align-items: center; justify-content: center; gap: 4px; flex: 0 0 63px; padding-top: 3px; border-bottom: 1px solid #2f4855; background: linear-gradient(to right, #aec8d8, #6e8592); }
  .actions button:last-child { flex: 1; border: 0; }
  .actions button:disabled { color: #b4c2cb; }
  .actions button:disabled .icon { opacity: .6; }
  .pages { display: flex; height: 23px; margin: 2px 4px; padding: 0 5px; border-top: 1px solid #2f4855; background: linear-gradient(#a0b8c6, #6e8592); }
  .pages button { height: 18px; margin-top: 1px; padding: 0 4px; border-right: 1px solid #d4e2ea; white-space: nowrap; }
  .pages .current { height: 20px; margin-top: 0; border: 1px solid #2f4855; border-top: 0; background: #90a7b5; }
  .pages button:last-child { border: 0; }

  footer { display: flex; justify-content: flex-end; gap: 10px; padding: 2px 10px 6px; }
  footer button { width: 75px; height: 25px; border: 1px solid #5d7684; border-top-color: #c4d6e0; border-left-color: #c4d6e0; background: linear-gradient(#a9c3d2, #6e8592); }
  footer .default { border: 1px solid #000; }
</style>
